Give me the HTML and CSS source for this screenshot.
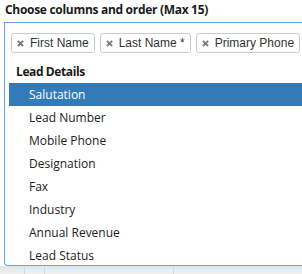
FILE: index.html
```html
<!DOCTYPE html>
<html>
<head>
<meta charset="utf-8">
<link rel="stylesheet" href="styles.css">
</head>
<body>
<div class="page">
  <div class="label">Choose columns and order (Max 15)</div>
  <div class="box">
    <ul class="choices">
      <li class="tag"><svg class="x" viewBox="0 0 8 8" width="7" height="7"><path d="M1 1L7 7M7 1L1 7"/></svg>First Name</li>
      <li class="tag"><svg class="x" viewBox="0 0 8 8" width="7" height="7"><path d="M1 1L7 7M7 1L1 7"/></svg>Last Name *</li>
      <li class="tag"><svg class="x" viewBox="0 0 8 8" width="7" height="7"><path d="M1 1L7 7M7 1L1 7"/></svg>Primary Phone</li>
    </ul>
    <div class="group">Lead Details</div>
    <ul class="results">
      <li class="item active">Salutation</li>
      <li class="item">Lead Number</li>
      <li class="item">Mobile Phone</li>
      <li class="item">Designation</li>
      <li class="item">Fax</li>
      <li class="item">Industry</li>
      <li class="item">Annual Revenue</li>
      <li class="item">Lead Status</li>
    </ul>
  </div>
  <div class="under">
    <div class="cell c1"></div>
    <div class="cell c2"></div>
    <div class="cell c3"></div>
    <div class="cell c4"></div>
  </div>
</div>
</body>
</html>
```

FILE: styles.css
```css
html, body {
  margin: 0;
  padding: 0;
  background: #fff;
  overflow: hidden;
}
.page {
  width: 302px;
  height: 274px;
  font-family: "Open Sans", sans-serif;
  color: #222;
}
.label {
  height: 22px;
  padding-left: 5px;
  font-size: 12px;
  font-weight: 700;
  letter-spacing: -0.3px;
  line-height: 20px;
  color: #1a1a1a;
}
.box {
  margin-left: 4px;
  border: 1px solid #66a6e0;
  border-right: none;
  border-radius: 0 0 0 4px;
  height: 242px;
  overflow: hidden;
  background: #fff;
}
.choices {
  list-style: none;
  margin: 0;
  padding: 10px 0 0 6px;
  display: flex;
  gap: 5px;
  white-space: nowrap;
}
.tag {
  flex: none;
  height: 18px;
  border: 1px solid #ccc;
  border-radius: 3px;
  padding: 0 5px 0 5px;
  font-family: "Liberation Sans", Arial, sans-serif;
  font-size: 12px;
  line-height: 18px;
  color: #333;
  display: flex;
  align-items: center;
}
.x {
  flex: none;
  margin-right: 6px;
  margin-top: 1px;
  stroke: #777;
  stroke-width: 2.2;
  fill: none;
}
.group {
  margin-top: 8px;
  padding-left: 11px;
  font-size: 12px;
  font-weight: 700;
  letter-spacing: -0.4px;
  line-height: 22px;
  height: 22px;
  color: #1a1a1a;
}
.results {
  list-style: none;
  margin: 0;
  padding: 0 0 0 4px;
}
.item {
  height: 23px;
  line-height: 23px;
  padding-left: 20px;
  font-size: 12px;
}
.item.active {
  background: #337ab7;
  color: #fff;
}
.under {
  display: flex;
  height: 9px;
  background: linear-gradient(#e4e4e4, #f2f2f2);
}
.cell {
  border-right: 1px solid #d6d6d6;
}
.c1 { width: 24px; }
.c2 { width: 19px; }
.c3 { width: 128px; }
.c4 { flex: 1; border-right: none; }
```
